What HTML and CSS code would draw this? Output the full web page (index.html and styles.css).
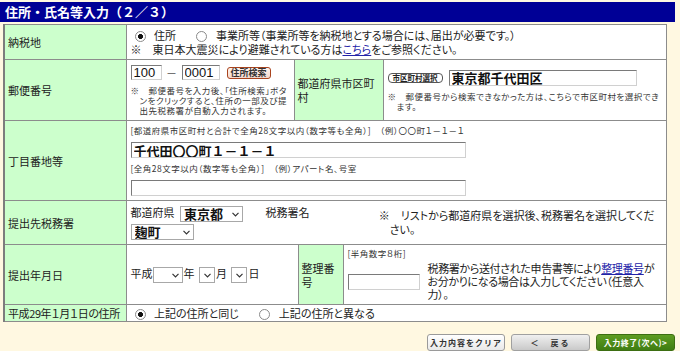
FILE: index.html
```html
<!DOCTYPE html>
<html lang="ja">
<head>
    <meta charset="UTF-8">
    <title>住所・氏名等入力</title>
    <link rel="stylesheet" href="styles.css">
</head>
<body>
<div class="page">
    <h1 class="title">住所・氏名等入力（２／３）</h1>

    <table class="form-table">
        <colgroup>
            <col class="col-label">
            <col class="col-a">
            <col class="col-b">
            <col class="col-c">
            <col class="col-d">
            <col class="col-e">
        </colgroup>
        <tr class="row-nozei">
            <th>納税地</th>
            <td colspan="5">
                <div class="radio-line">
                    <label><input type="radio" class="radio" name="nozei" checked> 住所</label>
                    <label><input type="radio" class="radio" name="nozei"> 事業所等（事業所等を納税地とする場合には、届出が必要です。）</label>
                </div>
                <p class="note-line">※　東日本大震災により避難されている方は<a href="#">こちら</a>をご参照ください。</p>
            </td>
        </tr>
        <tr class="row-zip">
            <th>郵便番号</th>
            <td>
                <div class="zip-line">
                    <input class="text-box zip zip-3" value="100">
                    <span class="dash">－</span>
                    <input class="text-box zip zip-4" value="0001">
                    <button class="btn-search">住所検索</button>
                </div>
                <p class="tiny-note hang">※　郵便番号を入力後、「住所検索」ボタンをクリックすると、住所の一部及び提出先税務署が自動入力されます。</p>
            </td>
            <th colspan="3">都道府県市区町村</th>
            <td>
                <div class="city-line">
                    <button class="btn-city">市区町村選択</button>
                    <input class="text-box city" value="東京都千代田区">
                </div>
                <p class="tiny-note hang">※　郵便番号から検索できなかった方は、こちらで市区町村を選択できます。</p>
            </td>
        </tr>
        <tr class="row-addr">
            <th>丁目番地等</th>
            <td colspan="5">
                <p class="tiny-note">[都道府県市区町村と合計で全角28文字以内（数字等も全角）]　（例）〇〇町１－１－１</p>
                <input class="text-box addr" value="千代田〇〇町１－１－１">
                <p class="tiny-note">[全角28文字以内（数字等も全角）]　（例）アパート名、号室</p>
                <input class="text-box addr">
            </td>
        </tr>
        <tr class="row-office">
            <th>提出先税務署</th>
            <td colspan="5">
                <div class="office">
                    <div class="office-select">
                        <div>
                            都道府県
                            <span class="select-wrap pref-select">
                                <select><option>東京都</option></select>
                                <svg class="chev" width="7" height="5" viewBox="0 0 7 5"><path d="M0.5 0.8 L3.5 3.8 L6.5 0.8" fill="none" stroke="#333" stroke-width="1.2"/></svg>
                            </span>
                            <span class="office-label">税務署名</span>
                        </div>
                        <span class="select-wrap office-name">
                            <select><option>麹町</option></select>
                            <svg class="chev" width="7" height="5" viewBox="0 0 7 5"><path d="M0.5 0.8 L3.5 3.8 L6.5 0.8" fill="none" stroke="#333" stroke-width="1.2"/></svg>
                        </span>
                    </div>
                    <p class="office-note hang-wide">※　リストから都道府県を選択後、税務署名を選択してください。</p>
                </div>
            </td>
        </tr>
        <tr class="row-date">
            <th>提出年月日</th>
            <td colspan="2">
                <div class="date-line">
                    平成<span class="select-wrap sel-year"><select><option></option></select><svg class="chev" width="7" height="5" viewBox="0 0 7 5"><path d="M0.5 0.8 L3.5 3.8 L6.5 0.8" fill="none" stroke="#333" stroke-width="1.2"/></svg></span>年
                    <span class="select-wrap sel-small"><select><option></option></select><svg class="chev" width="7" height="5" viewBox="0 0 7 5"><path d="M0.5 0.8 L3.5 3.8 L6.5 0.8" fill="none" stroke="#333" stroke-width="1.2"/></svg></span>月
                    <span class="select-wrap sel-small"><select><option></option></select><svg class="chev" width="7" height="5" viewBox="0 0 7 5"><path d="M0.5 0.8 L3.5 3.8 L6.5 0.8" fill="none" stroke="#333" stroke-width="1.2"/></svg></span>日
                </div>
            </td>
            <th class="sub-label">整理番号</th>
            <td colspan="2">
                <p class="tiny-note">[半角数字８桁]</p>
                <div class="seiri">
                    <input class="text-box seiri-input">
                    <p>税務署から送付された申告書等により<a href="#">整理番号</a>がお分かりになる場合は入力してください（任意入力）。</p>
                </div>
            </td>
        </tr>
        <tr class="row-h29">
            <th class="nowrap">平成29年１月１日の住所</th>
            <td colspan="5">
                <div class="radio-line">
                    <label><input type="radio" class="radio" name="h29" checked> 上記の住所と同じ</label>
                    <label><input type="radio" class="radio" name="h29"> 上記の住所と異なる</label>
                </div>
            </td>
        </tr>
    </table>

    <div class="actions">
        <button class="btn btn-clear">入力内容をクリア</button>
        <button class="btn btn-back">＜　戻る</button>
        <button class="btn btn-next">入力終了(次へ)&gt;</button>
    </div>
</div>
</body>
</html>
```

FILE: styles.css
```css
body {
    margin: 0;
    background-color: #fff8e1;
    font-family: "Noto Sans CJK JP", "Liberation Sans", sans-serif;
    font-size: 11px;
    color: #222;
    font-feature-settings: "palt";
}
p {
    margin: 0;
}
a {
    color: #2323a8;
}
.page {
    width: 675px;
    padding-top: 2px;
}
.title {
    margin: 0;
    height: 20px;
    line-height: 20px;
    padding-left: 5px;
    background-color: #000096;
    color: #fff;
    font-size: 13px;
    font-weight: bold;
    font-feature-settings: normal;
}

/* main table */
.form-table {
    margin: 2px 0 0 3px;
    width: 662px;
    border-collapse: collapse;
    table-layout: fixed;
    background-color: #fff;
    border: 1px solid #7d7d7d;
    border-left-width: 2px;
}
.col-label { width: 122px; }
.col-a { width: 168px; }
.col-b { width: 4px; }
.col-c { width: 45px; }
.col-d { width: 40px; }
.col-e { width: 283px; }

.form-table th,
.form-table td {
    border: 1px solid #8c8c8c;
    padding: 0 4px;
    vertical-align: middle;
    text-align: left;
    font-weight: normal;
    line-height: 14px;
}
.form-table th {
    background-color: #ccffcc;
    padding-left: 3px;
}
.form-table th.nowrap {
    white-space: nowrap;
    letter-spacing: -0.4px;
}
.row-nozei { height: 35px; }
.row-zip { height: 61px; }
.row-addr { height: 80px; }
.row-office { height: 44px; }
.row-date { height: 60px; }
.row-h29 { height: 17px; }
.row-h29 th,
.row-h29 td {
    line-height: 15px;
}

/* radios */
.radio-line label {
    margin-right: 14px;
}
.radio {
    appearance: none;
    width: 11px;
    height: 11px;
    margin: 0 6px 0 4px;
    vertical-align: -2px;
    border: 1px solid #8a8a8a;
    border-radius: 50%;
    background-color: #fff;
}
.radio:checked {
    background: radial-gradient(circle, #111 0, #111 2.2px, #fff 2.8px);
}

/* text boxes */
.text-box {
    box-sizing: border-box;
    margin: 0;
    padding: 0 2px;
    border: 1px solid;
    border-color: #7a7a7a #d0d0d0 #d0d0d0 #7a7a7a;
    background-color: #fff;
    font-family: "Noto Sans CJK JP", sans-serif;
    color: #111;
    vertical-align: middle;
}
.zip {
    height: 15px;
    font-size: 13px;
    font-family: "Liberation Sans", sans-serif;
    line-height: 13px;
}
.zip-3 { width: 31px; }
.zip-4 { width: 38px; }
.dash {
    display: inline-block;
    width: 20px;
    text-align: center;
    color: #555;
}
.zip-line,
.city-line {
    display: flex;
    align-items: center;
    margin-bottom: 5px;
}
.btn-search {
    margin-left: 7px;
    height: 12px;
    padding: 0 3px;
    border: 1px solid #a9441e;
    border-radius: 3px;
    background: linear-gradient(#fff4ee, #f5d9cc);
    font-family: "Noto Sans CJK JP", sans-serif;
    font-size: 9px;
    font-weight: bold;
    line-height: 10px;
    color: #333;
}
.tiny-note {
    font-size: 8.5px;
    line-height: 10px;
    letter-spacing: 0.5px;
    color: #333;
}
.hang {
    padding-left: 9px;
    text-indent: -9px;
}
.btn-city {
    height: 10px;
    width: 55px;
    padding: 0;
    margin-right: 6px;
    border: 1px solid #555;
    border-radius: 4px;
    background-color: #fff;
    font-family: "Noto Sans CJK JP", sans-serif;
    font-size: 7.5px;
    font-weight: bold;
    line-height: 8px;
    color: #222;
}
.city {
    width: 188px;
    height: 16px;
    font-size: 13px;
    font-weight: bold;
    line-height: 14px;
}
.addr {
    display: block;
    width: 335px;
    height: 16px;
    margin: 7px 0 5px;
    font-size: 13px;
    font-weight: bold;
    line-height: 14px;
}
.row-addr .addr:last-child {
    margin-bottom: 0;
}

/* selects */
.select-wrap {
    position: relative;
    display: inline-block;
    box-sizing: border-box;
    height: 16px;
    border: 1px solid #a8a8a8;
    background-color: #fff;
    vertical-align: middle;
}
.select-wrap select {
    appearance: none;
    width: 100%;
    height: 14px;
    padding: 0 0 0 3px;
    border: none;
    background: transparent;
    font-family: "Noto Sans CJK JP", sans-serif;
    font-size: 13px;
    font-weight: bold;
    line-height: 14px;
    color: #111;
}
.select-wrap .chev {
    position: absolute;
    right: 3px;
    top: 5px;
}
.pref-select {
    width: 63px;
    margin-left: 3px;
}
.office-label {
    margin-left: 20px;
}
.office-name {
    width: 63px;
    margin-top: 1px;
}
.office {
    display: flex;
    align-items: flex-start;
}
.office-select {
    width: 252px;
}
.office-note {
    margin-top: 3px;
    width: 276px;
    line-height: 14px;
}
.hang-wide {
    padding-left: 11px;
    text-indent: -11px;
}
.sel-year {
    width: 30px;
    margin-right: 1px;
}
.sel-small {
    width: 16px;
    margin: 0 1px 0 2px;
}
.date-line {
    white-space: nowrap;
}
.sub-label {
    word-break: break-all;
}
.seiri {
    display: flex;
    align-items: center;
    margin-top: 4px;
}
.seiri-input {
    width: 72px;
    height: 16px;
    flex-shrink: 0;
    margin-right: 8px;
}
.seiri p {
    line-height: 13px;
    letter-spacing: -0.35px;
}

/* bottom buttons */
.actions {
    display: flex;
    justify-content: flex-end;
    gap: 6px;
    margin-top: 12px;
}
.btn {
    height: 17px;
    padding: 0;
    border-radius: 3px;
    font-family: "Noto Sans CJK JP", sans-serif;
    font-size: 8px;
    font-weight: bold;
    letter-spacing: 1px;
    line-height: 15px;
    white-space: nowrap;
}
.btn-clear {
    width: 78px;
    border: 1px solid #9a9a9a;
    background: linear-gradient(#ffffff, #e9e9e9);
    color: #333;
}
.btn-back {
    width: 79px;
    border: 1px solid #a0a0a0;
    background: linear-gradient(#f0f0f0, #c9c9c9);
    color: #333;
    letter-spacing: 2px;
}
.btn-next {
    width: 79px;
    border: 1px solid #3d6e12;
    background: linear-gradient(#5e9d22, #3f7d12);
    color: #fff;
    letter-spacing: 0.5px;
}
```
